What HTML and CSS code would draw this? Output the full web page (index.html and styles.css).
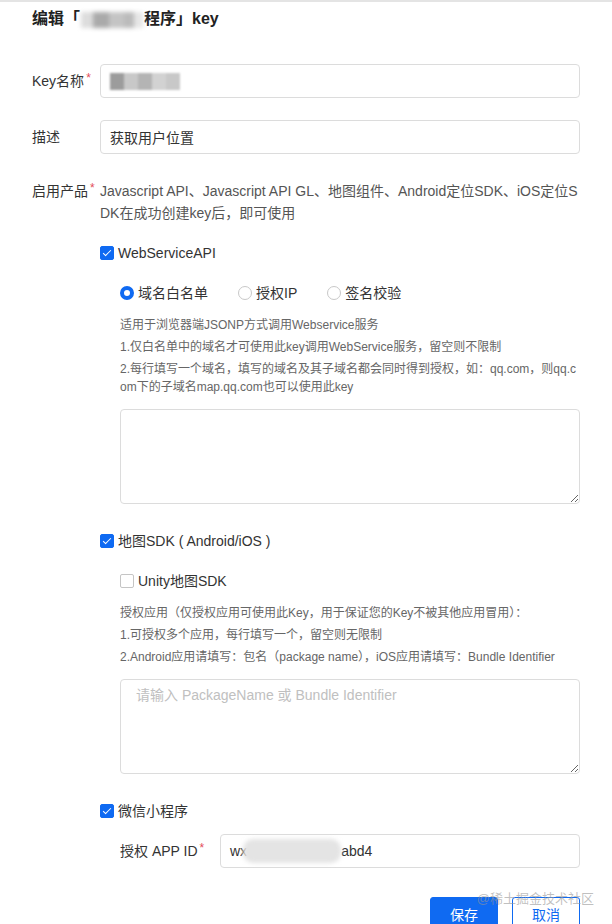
FILE: index.html
```html
<!DOCTYPE html>
<html lang="zh-CN">
<head>
    <meta charset="UTF-8">
    <meta name="viewport" content="width=device-width, initial-scale=1.0">
    <title>编辑小程序key</title>
    <link rel="stylesheet" href="styles.css">
</head>
<body>
    <div class="page">
        <h1 class="title">编辑「<span class="mask title-mask"></span>程序」key</h1>

        <div class="row first">
            <label class="label">Key名称<i class="req">*</i></label>
            <div class="input">
                <span class="mosaic">
                    <b class="m1"></b><b class="m2"></b><b class="m3"></b><b class="m4"></b><b class="m2"></b>
                </span>
            </div>
        </div>

        <div class="row second">
            <label class="label">描述</label>
            <div class="input">获取用户位置</div>
        </div>

        <div class="row products">
            <label class="label">启用产品<i class="req">*</i></label>
            <p class="products-text">Javascript API、Javascript API GL、地图组件、Android定位SDK、iOS定位SDK在成功创建key后，即可使用</p>
        </div>

        <div class="group">
            <div class="check"><span class="box on"></span>WebServiceAPI</div>

            <div class="sub">
                <div class="radios">
                    <span class="radio-item"><span class="radio on"></span>域名白名单</span>
                    <span class="radio-item"><span class="radio"></span>授权IP</span>
                    <span class="radio-item"><span class="radio"></span>签名校验</span>
                </div>
                <div class="desc">
                    <p>适用于浏览器端JSONP方式调用Webservice服务</p>
                    <p>1.仅白名单中的域名才可使用此key调用WebService服务，留空则不限制</p>
                    <p>2.每行填写一个域名，填写的域名及其子域名都会同时得到授权，如：qq.com，则qq.com下的子域名map.qq.com也可以使用此key</p>
                </div>
                <textarea class="area"></textarea>
            </div>

            <div class="check big-gap"><span class="box on"></span>地图SDK ( Android/iOS )</div>

            <div class="sub">
                <div class="check"><span class="box"></span>Unity地图SDK</div>
                <div class="desc">
                    <p>授权应用（仅授权应用可使用此Key，用于保证您的Key不被其他应用冒用）：</p>
                    <p>1.可授权多个应用，每行填写一个，留空则无限制</p>
                    <p>2.Android应用请填写：包名（package name），iOS应用请填写：Bundle Identifier</p>
                </div>
                <textarea class="area" placeholder="请输入 PackageName 或 Bundle Identifier"></textarea>
            </div>

            <div class="check big-gap"><span class="box on"></span>微信小程序</div>

            <div class="sub">
                <div class="row appid">
                    <label class="label wide">授权 APP ID<i class="req">*</i></label>
                    <div class="input">wx<span class="mask id-mask"></span>abd4</div>
                </div>
            </div>
        </div>

        <div class="actions">
            <button class="btn primary">保存</button>
            <button class="btn">取消</button>
            <span class="watermark">@稀土掘金技术社区</span>
        </div>
    </div>
</body>
</html>
```

FILE: styles.css
```css
body {
    margin: 0;
    font-family: "Liberation Sans", "Noto Sans CJK SC", sans-serif;
    font-size: 14px;
    color: #333;
    background: #fff;
    border-top: 2px solid #e4e4e4;
}
.page {
    padding: 0 32px;
}
.title {
    margin: 6px 0 0;
    font-size: 16px;
    line-height: 22px;
    font-weight: bold;
    color: #222;
}
.mask {
    display: inline-block;
    vertical-align: middle;
    filter: blur(2px);
}
.title-mask {
    width: 62px;
    height: 16px;
    margin: 0 1px;
    background: linear-gradient(90deg, #ddd 0 20%, #aaa 20% 45%, #c4c4c4 45% 70%, #bbb 70% 85%, #e6e6e6 85%);
}
.row {
    display: flex;
    align-items: center;
}
.label {
    width: 68px;
    flex-shrink: 0;
    line-height: 22px;
    color: #333;
}
.label.wide {
    width: 100px;
}
.req {
    font-style: normal;
    color: #e34d59;
    font-size: 12px;
    vertical-align: top;
    position: relative;
    top: -3px;
    margin-left: 2px;
}
.input {
    flex: 1;
    height: 34px;
    box-sizing: border-box;
    border: 1px solid #dcdcdc;
    border-radius: 4px;
    padding: 0 9px;
    display: flex;
    align-items: center;
    color: #333;
}
.first {
    margin-top: 34px;
}
.second {
    margin-top: 22px;
}
.mosaic {
    display: flex;
    height: 17px;
    filter: blur(1px);
}
.mosaic b {
    width: 14px;
    height: 17px;
}
.m1 { background: #9c9c9c; }
.m2 { background: #c8c8c8; }
.m3 { background: #b4b4b4; }
.m4 { background: #d2d2d2; }
.products {
    margin-top: 26px;
    align-items: flex-start;
}
.products-text {
    margin: 0;
    flex: 1;
    line-height: 22px;
    color: #555;
    word-break: break-all;
}
.group {
    padding-left: 68px;
}
.check {
    display: flex;
    align-items: center;
    line-height: 22px;
    margin-top: 18px;
    color: #333;
}
.check.big-gap {
    margin-top: 26px;
}
.box {
    width: 14px;
    height: 14px;
    box-sizing: border-box;
    border: 1px solid #c5c5c5;
    border-radius: 2px;
    margin-right: 4px;
    position: relative;
    background: #fff;
}
.box.on {
    background: #0f6af2;
    border-color: #0f6af2;
}
.box.on::after {
    content: "";
    position: absolute;
    left: 4px;
    top: 1px;
    width: 3px;
    height: 7px;
    border: solid #fff;
    border-width: 0 1.5px 1.5px 0;
    transform: rotate(45deg);
}
.sub {
    padding-left: 20px;
}
.radios {
    display: flex;
    gap: 30px;
    margin-top: 18px;
    line-height: 22px;
}
.radio-item {
    display: flex;
    align-items: center;
}
.radio {
    width: 14px;
    height: 14px;
    box-sizing: border-box;
    border: 1px solid #c8c8c8;
    border-radius: 50%;
    margin-right: 4px;
    background: #fff;
}
.radio.on {
    border: 4px solid #0f6af2;
}
.desc {
    margin-top: 12px;
    font-size: 12px;
    color: #666;
    word-break: break-all;
}
.desc p {
    margin: 4px 0 0;
    line-height: 18px;
}
.desc p:first-child {
    margin-top: 0;
}
.area {
    display: block;
    width: 100%;
    height: 95px;
    box-sizing: border-box;
    margin-top: 13px;
    border: 1px solid #dcdcdc;
    border-radius: 4px;
    padding: 4px 15px;
    font-family: "Liberation Sans", "Noto Sans CJK SC", sans-serif;
    font-size: 14px;
    resize: vertical;
}
.area::placeholder {
    color: #c0c0c0;
}
.appid {
    margin-top: 12px;
}
.id-mask {
    width: 98px;
    height: 24px;
    margin-left: -4px;
    background: #e4e4e4;
    border-radius: 10px;
}
.actions {
    display: flex;
    justify-content: flex-end;
    gap: 14px;
    margin-top: 29px;
    position: relative;
}
.btn {
    width: 68px;
    height: 34px;
    border: 1px solid #0f6af2;
    border-radius: 3px;
    background: #fff;
    color: #0f6af2;
    font-family: "Liberation Sans", "Noto Sans CJK SC", sans-serif;
    font-size: 14px;
    padding: 0;
}
.btn.primary {
    background: #0f6af2;
    color: #fff;
}
.watermark {
    position: absolute;
    right: -14px;
    top: -9px;
    font-size: 13px;
    color: rgba(150, 150, 150, 0.6);
}
```
